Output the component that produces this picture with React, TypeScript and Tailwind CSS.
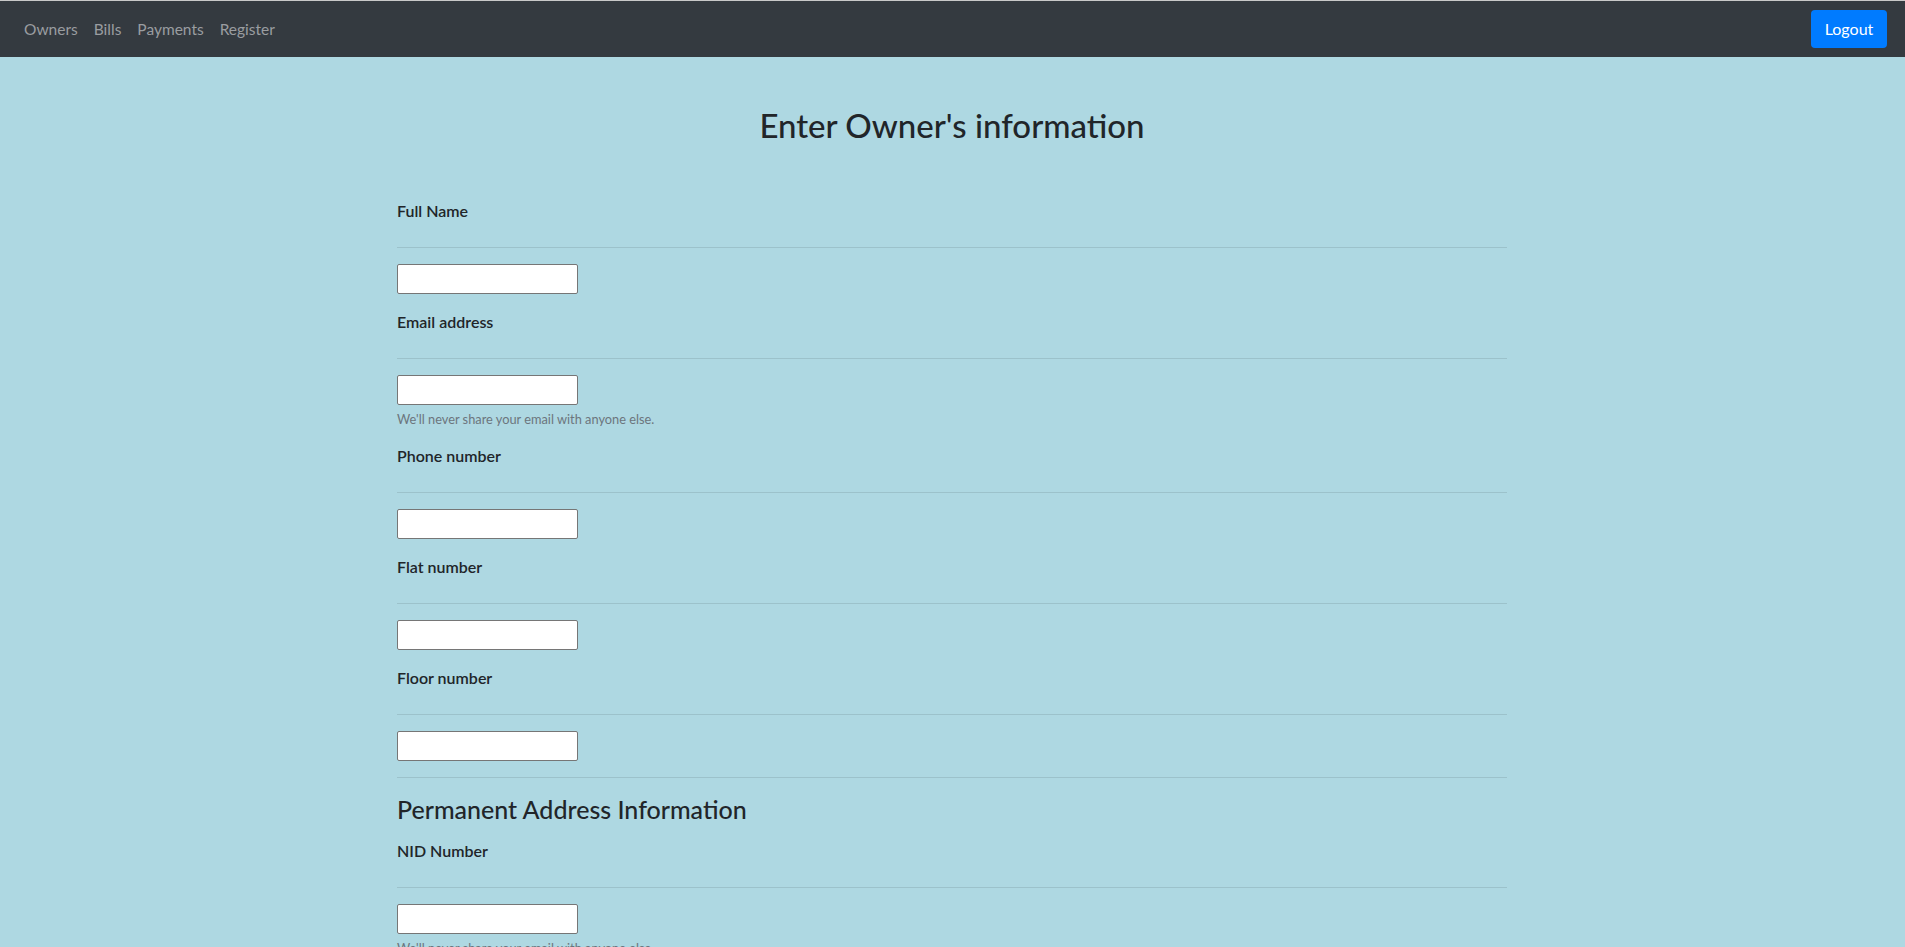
const font = { fontFamily: '"Lato", "Open Sans", sans-serif' };

const NavLink = ({ label }: { label: string }) => (
  <a href="#" className="px-2 py-2 text-[15.5px] leading-6 text-[#9a9da0] hover:text-[#c8cacc]">
    {label}
  </a>
);

interface FieldProps {
  label: string;
  help?: string;
}

const Field = ({ label, help }: FieldProps) => (
  <div className="mb-4">
    <label className="block text-[16px] leading-6 font-semibold text-[#212529]">{label}</label>
    <hr className="mt-6 mb-4 border-t border-black/10" />
    <input
      type="text"
      className="block w-[181px] h-[30px] bg-white border border-[#767676] rounded-[2px] px-1 text-[14px]"
    />
    {help && <small className="block mt-[6px] text-[12.8px] leading-[17px] text-[#6c757d]">{help}</small>}
  </div>
);

export default function App() {
  return (
    <div className="h-screen overflow-hidden bg-[#aed8e2]" style={font}>
      <nav className="flex items-center justify-between h-[57px] bg-[#343a40] border-t border-[#c9c9c9] pl-4 pr-[18px]">
        <div className="flex items-center">
          <NavLink label="Owners" />
          <NavLink label="Bills" />
          <NavLink label="Payments" />
          <NavLink label="Register" />
        </div>
        <button className="flex items-center justify-center w-[76px] h-[38px] rounded bg-[#007bff] text-white text-[16px]">
          Logout
        </button>
      </nav>

      <div className="w-[1110px] ml-[397px]">
        <h2 className="mt-[49px] text-center text-[33px] leading-[1.2] font-medium text-[#212529]">
          Enter Owner's information
        </h2>

        <form className="mt-[53px]">
          <Field label="Full Name" />
          <Field label="Email address" help="We'll never share your email with anyone else." />
          <Field label="Phone number" />
          <Field label="Flat number" />
          <Field label="Floor number" />

          <hr className="border-t border-black/10" />
          <h4 className="mt-4 text-[25px] leading-[1.2] font-medium text-[#212529]">
            Permanent Address Information
          </h4>
          <div className="mt-[15px]">
            <Field label="NID Number" help="We'll never share your email with anyone else." />
            <Field label="Village" />
            <Field label="District" />
          </div>
        </form>
      </div>
    </div>
  );
}
